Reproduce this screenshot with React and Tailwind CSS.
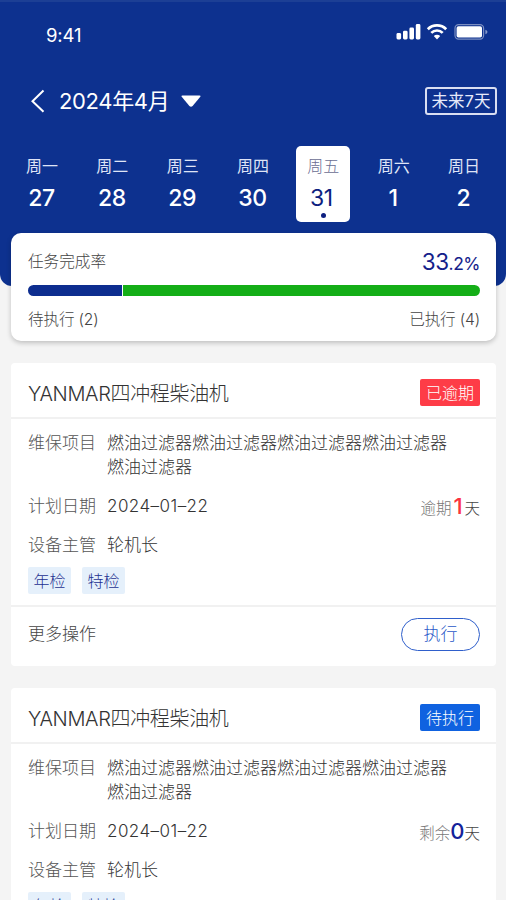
const DIAS = [
  { semana: '周一', dia: 27 },
  { semana: '周二', dia: 28 },
  { semana: '周三', dia: 29 },
  { semana: '周四', dia: 30 },
  { semana: '周五', dia: 31, activo: true },
  { semana: '周六', dia: 1 },
  { semana: '周日', dia: 2 },
]

const TAREAS = [
  { id: 1, estado: '已逾期', colorEstado: 'bg-[#fe3c47]', plazo: '逾期', dias: 1, colorDias: 'text-[#fb3340]' },
  { id: 2, estado: '待执行', colorEstado: 'bg-[#0f62e0]', plazo: '剩余', dias: 0, colorDias: 'text-[#14239a]' },
]

function IconosEstado() {
  return (
    <svg width="94" height="18" viewBox="0 0 94 18" fill="#fff">
      {/* Señal */}
      <rect x="0.5" y="10" width="4.6" height="6.5" rx="1.4" />
      <rect x="7" y="7.7" width="4.6" height="8.8" rx="1.4" />
      <rect x="13.4" y="4.5" width="4.6" height="12" rx="1.4" />
      <rect x="19.8" y="1" width="4.6" height="15.5" rx="1.4" />
      {/* Wifi */}
      <g fill="none" stroke="#fff" strokeWidth="2.7">
        <path d="M31.8 6.2a13 13 0 0 1 18.4 0" />
        <path d="M35.3 9.9a8 8 0 0 1 11.4 0" />
      </g>
      <path d="M41 16.4l-3.2-3.3a4.6 4.6 0 0 1 6.4 0z" />
      {/* Batería */}
      <rect x="59" y="1.7" width="28.6" height="14.4" rx="3.6" fill="none" stroke="#fff" strokeOpacity="0.45" strokeWidth="1.2" />
      <rect x="60.6" y="3.3" width="25.4" height="11.2" rx="1.8" />
      <path d="M89.4 6.8c1.4.5 2 1.3 2 2.2s-.6 1.7-2 2.2z" fillOpacity="0.5" />
    </svg>
  )
}

function Tarea({ tarea }) {
  return (
    <article className="h-[303px] shrink-0 rounded-[4px] bg-white text-[17px]">
      <header className="flex h-[56px] items-center justify-between border-b-2 border-[#f1f1f1] pl-[17px] pr-4 pt-[5px]">
        <h2 className="pt-[2px] text-[20px] leading-6 tracking-[-0.35px] text-[#333]">YANMAR四冲程柴油机</h2>
        <span className={`flex h-[27px] w-[60px] items-center justify-center rounded-[2px] text-[16px] leading-none text-white ${tarea.colorEstado}`}>
          {tarea.estado}
        </span>
      </header>

      <div className="h-[188px] border-b-2 border-[#f1f1f1] pl-[17px] pr-4 pt-[12px]">
        <div className="flex gap-[11px] leading-6">
          <span className="w-[68px] shrink-0 text-[#555]">维保项目</span>
          <p className="w-[342px] text-[#333]">燃油过滤器燃油过滤器燃油过滤器燃油过滤器燃油过滤器</p>
        </div>
        <div className="mt-[15px] flex gap-[11px] leading-6">
          <span className="w-[68px] shrink-0 text-[#555]">计划日期</span>
          <span className="tracking-[0.45px] text-[#333]">2024–01–22</span>
          <span className="ml-auto flex h-6 items-baseline text-[15.5px] text-[#777]">
            {tarea.plazo}
            <b className={`min-w-[13px] text-center text-[22px] leading-6 font-medium ${tarea.colorDias}`}>{tarea.dias}</b>
            <span className="text-[#444]">天</span>
          </span>
        </div>
        <div className="mt-[15px] flex gap-[11px] leading-6">
          <span className="w-[68px] shrink-0 text-[#555]">设备主管</span>
          <span className="text-[#333]">轮机长</span>
        </div>
        <div className="mt-[10px] flex gap-[11px] text-[16px] text-[#1d3191]">
          <span className="flex h-[27px] w-[43px] items-center justify-center rounded-[2px] bg-[#e5f0fb] leading-6">年检</span>
          <span className="flex h-[27px] w-[43px] items-center justify-center rounded-[2px] bg-[#e5f0fb] leading-6">特检</span>
        </div>
      </div>

      <footer className="flex h-[56px] items-center justify-between pb-px pl-[17px] pr-4">
        <span className="text-[#444]">更多操作</span>
        <button className="h-[33px] w-[79px] rounded-full border border-[#2f5fcb] text-[17px] leading-[31px] text-[#2a58c8]">执行</button>
      </footer>
    </article>
  )
}

export default function App() {
  return (
    <div className="flex h-[900px] w-[506px] flex-col overflow-hidden bg-[#f4f4f4] font-['Inter','Noto_Sans_CJK_SC',sans-serif] font-light">

      {/* Cabecera */}
      <header className="h-[286px] shrink-0 rounded-b-[12px] border-t-2 border-[#1c3f95] bg-[#0d318f] text-white">
        <div className="flex h-[62px] items-start justify-between pl-[46px] pr-[16px] pt-[21px]">
          <span className="text-[18.5px] leading-6 font-normal tracking-[-0.1px]">9:41</span>
          <IconosEstado />
        </div>

        <div className="mt-[21px] flex h-8 items-center justify-between pl-[31px] pr-[9px]">
          <div className="flex items-center">
            <svg width="14" height="24" viewBox="0 0 14 24" fill="none" stroke="#fff" strokeWidth="2">
              <path d="M12.5 1.5L1.5 12.2l11 10.6" />
            </svg>
            <span className="ml-[14px] text-[22px] leading-8 font-normal tracking-[-0.35px]">2024年4月</span>
            <svg className="ml-3" width="20" height="13" viewBox="0 0 20 13" fill="#fff">
              <path d="M1.5 0.5h17q1.8 0 .6 1.5l-7.5 9q-1.6 1.6-3.2 0l-7.5-9Q-.3.5 1.5.5z" />
            </svg>
          </div>
          <button className="h-7 w-[72px] rounded-[3px] border-2 border-[#d9def2] text-[16.5px] leading-6 font-normal text-[#e6eafa]">未来7天</button>
        </div>

        <div className="mt-[29px] flex justify-between pl-[15px] pr-[15px]">
          {DIAS.map(d => (
            <div key={d.semana}
              className={`flex h-[76px] w-[54px] flex-col items-center rounded-[5px] pt-[8px] ${d.activo ? 'bg-white' : ''}`}>
              <span className={`text-[16px] leading-6 ${d.activo ? 'text-[#6a6d92]' : 'font-normal text-[#dfe4f6]'}`}>{d.semana}</span>
              <span className={`mt-[6px] text-[23px] leading-7 tracking-[-0.4px] ${d.activo ? '-ml-[4px] font-normal text-[#0d1f80]' : '-ml-px font-medium'}`}>{d.dia}</span>
              {d.activo && <i className="mt-px size-[5px] rounded-full bg-[#0d1f80]" />}
            </div>
          ))}
        </div>
      </header>

      <main className="relative -mt-[53px] flex flex-col pl-[11px] pr-[10px]">
        {/* Progreso */}
        <section className="h-[108px] shrink-0 rounded-[10px] bg-white pl-[17px] pr-4 pt-[15px] text-[15.6px] text-[#444] shadow-[0_2px_5px_rgba(0,0,0,0.22)]">
          <div className="flex h-7 justify-between leading-7">
            <span>任务完成率</span>
            <span className="text-[22.5px] font-normal tracking-[-0.5px] text-[#14218a]">33<span className="text-[17.5px]">.2%</span></span>
          </div>
          <div className="mt-[9px] flex h-[11px] gap-px overflow-hidden rounded-full">
            <div className="w-[94px] bg-[#0d2d8f]" />
            <div className="flex-1 bg-[#14ae17]" />
          </div>
          <div className="mt-[12px] flex justify-between leading-6 tracking-[-0.15px]">
            <span>待执行 (2)</span>
            <span>已执行 (4)</span>
          </div>
        </section>

        {/* Lista de tareas */}
        <div className="mt-[22px] flex flex-col gap-[22px]">
          {TAREAS.map(t => <Tarea key={t.id} tarea={t} />)}
        </div>
      </main>
    </div>
  )
}
